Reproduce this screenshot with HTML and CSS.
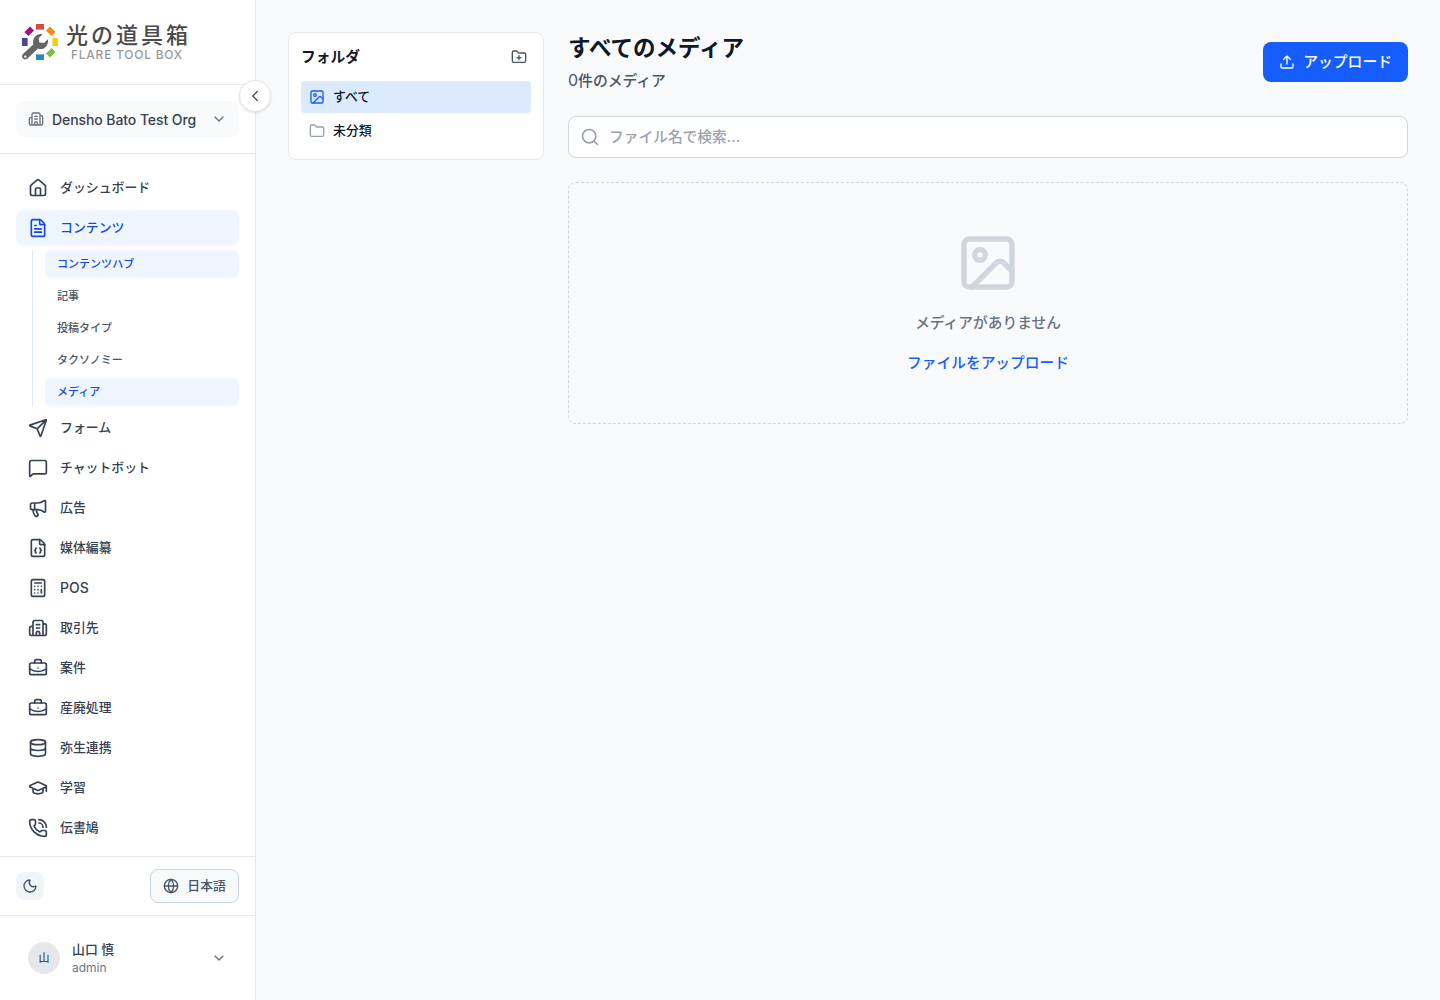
FILE: index.html
```html
<!DOCTYPE html>
<html lang="ja">
<head>
  <meta charset="UTF-8">
  <meta name="viewport" content="width=device-width, initial-scale=1.0">
  <title>光の道具箱</title>
  <link rel="stylesheet" href="styles.css">
</head>
<body>

<div class="app">
  <aside class="sidebar">
    <div class="brand">
      <svg class="brand-mark" viewBox="0 0 36 36">
        <rect x="14" y="0" width="8" height="5.6" fill="#dc483d"/>
        <rect x="14" y="0" width="8" height="5.6" fill="#f28c13" transform="rotate(45 18 18)"/>
        <rect x="14" y="0" width="8" height="5.6" fill="#f7cb1b" transform="rotate(90 18 18)"/>
        <rect x="14" y="0" width="8" height="5.6" fill="#7bbd3e" transform="rotate(135 18 18)"/>
        <rect x="14" y="0" width="8" height="5.6" fill="#238cbd" transform="rotate(180 18 18)"/>
        <rect x="14" y="0" width="8" height="5.6" fill="#44459b" transform="rotate(270 18 18)"/>
        <rect x="14" y="0" width="8" height="5.6" fill="#a90e79" transform="rotate(315 18 18)"/>
        <path fill="#666" d="M20.5 10.2l-3.700 3.700.5 4.700 4.600.5 3.900-3.800c1.100 4.600-2 9.200-6.300 9.600-1.500.1-2.700-.1-3.600-.5L6.100 34.100c-1.500 1.600-3.700 1.800-5.100.5-1.400-1.400-1.200-3.600.4-5.100l9.900-9.100c-1.300-5.600 2.700-11.400 9.200-10.200z"/>
        <circle cx="3.300" cy="32.600" r="1.200" fill="#fff"/>
      </svg>
      <div class="brand-text">
        <div class="brand-name">光の道具箱</div>
        <div class="brand-sub">FLARE TOOL BOX</div>
      </div>
    </div>

    <div class="org">
      <button class="org-btn">
        <svg class="icon icon-sm" viewBox="0 0 24 24"><path d="M10 12h4M10 8h4M14 21v-3a2 2 0 0 0-4 0v3M6 10H4a2 2 0 0 0-2 2v7a2 2 0 0 0 2 2h16a2 2 0 0 0 2-2V9a2 2 0 0 0-2-2h-2M6 21V5a2 2 0 0 1 2-2h8a2 2 0 0 1 2 2v16"/></svg>
        <span class="org-name">Densho Bato Test Org</span>
        <svg class="icon icon-sm" viewBox="0 0 24 24"><path d="m6 9 6 6 6-6"/></svg>
      </button>
    </div>

    <nav class="nav">
      <a class="nav-item">
        <svg class="icon" viewBox="0 0 24 24"><path d="M15 21v-8a1 1 0 0 0-1-1h-4a1 1 0 0 0-1 1v8"/><path d="M3 10a2 2 0 0 1 .709-1.528l7-6a2 2 0 0 1 2.582 0l7 6A2 2 0 0 1 21 10v9a2 2 0 0 1-2 2H5a2 2 0 0 1-2-2z"/></svg>
        <span>ダッシュボード</span>
      </a>
      <a class="nav-item active">
        <svg class="icon" viewBox="0 0 24 24"><path d="M6 22a2 2 0 0 1-2-2V4a2 2 0 0 1 2-2h8a2.400 2.400 0 0 1 1.704.706l3.588 3.588A2.400 2.400 0 0 1 20 8v12a2 2 0 0 1-2 2z"/><path d="M14 2v5a1 1 0 0 0 1 1h5M10 9H8M16 13H8M16 17H8"/></svg>
        <span>コンテンツ</span>
      </a>
      <div class="subnav">
        <a class="subnav-item active">コンテンツハブ</a>
        <a class="subnav-item">記事</a>
        <a class="subnav-item">投稿タイプ</a>
        <a class="subnav-item">タクソノミー</a>
        <a class="subnav-item active">メディア</a>
      </div>
      <a class="nav-item">
        <svg class="icon" viewBox="0 0 24 24"><path d="M14.536 21.686a.5.5 0 0 0 .937-.024l6.500-19a.496.496 0 0 0-.635-.635l-19 6.500a.5.5 0 0 0-.024.937l7.930 3.180a2 2 0 0 1 1.112 1.110zM21.854 2.147l-10.940 10.939"/></svg>
        <span>フォーム</span>
      </a>
      <a class="nav-item">
        <svg class="icon" viewBox="0 0 24 24"><path d="M22 17a2 2 0 0 1-2 2H6.828a2 2 0 0 0-1.414.586l-2.202 2.202A.71.71 0 0 1 2 21.286V5a2 2 0 0 1 2-2h16a2 2 0 0 1 2 2z"/></svg>
        <span>チャットボット</span>
      </a>
      <a class="nav-item">
        <svg class="icon" viewBox="0 0 24 24"><path d="M11 6a13 13 0 0 0 8.400-2.800A1 1 0 0 1 21 4v12a1 1 0 0 1-1.600.8A13 13 0 0 0 11 14H5a2 2 0 0 1-2-2V8a2 2 0 0 1 2-2zM6 14a12 12 0 0 0 2.400 7.200 2 2 0 0 0 3.200-2.400A8 8 0 0 1 10 14M8 6v8"/></svg>
        <span>広告</span>
      </a>
      <a class="nav-item">
        <svg class="icon" viewBox="0 0 24 24"><path d="M6 22a2 2 0 0 1-2-2V4a2 2 0 0 1 2-2h8a2.400 2.400 0 0 1 1.704.706l3.588 3.588A2.400 2.400 0 0 1 20 8v12a2 2 0 0 1-2 2z"/><path d="M14 2v5a1 1 0 0 0 1 1h5M10 12a1 1 0 0 0-1 1v1a1 1 0 0 1-1 1 1 1 0 0 1 1 1v1a1 1 0 0 0 1 1M14 18a1 1 0 0 0 1-1v-1a1 1 0 0 1 1-1 1 1 0 0 1-1-1v-1a1 1 0 0 0-1-1"/></svg>
        <span>媒体編纂</span>
      </a>
      <a class="nav-item">
        <svg class="icon" viewBox="0 0 24 24"><rect width="16" height="20" x="4" y="2" rx="2"/><path d="M8 6h8M16 14v4M16 10h.01M12 10h.01M8 10h.01M12 14h.01M8 14h.01M12 18h.01M8 18h.01"/></svg>
        <span class="latin">POS</span>
      </a>
      <a class="nav-item">
        <svg class="icon" viewBox="0 0 24 24"><path d="M10 12h4M10 8h4M14 21v-3a2 2 0 0 0-4 0v3M6 10H4a2 2 0 0 0-2 2v7a2 2 0 0 0 2 2h16a2 2 0 0 0 2-2V9a2 2 0 0 0-2-2h-2M6 21V5a2 2 0 0 1 2-2h8a2 2 0 0 1 2 2v16"/></svg>
        <span>取引先</span>
      </a>
      <a class="nav-item">
        <svg class="icon" viewBox="0 0 24 24"><path d="M12 12h.01M16 6V4a2 2 0 0 0-2-2h-4a2 2 0 0 0-2 2v2M22 13a18.150 18.150 0 0 1-20 0"/><rect width="20" height="14" x="2" y="6" rx="2"/></svg>
        <span>案件</span>
      </a>
      <a class="nav-item">
        <svg class="icon" viewBox="0 0 24 24"><path d="M12 12h.01M16 6V4a2 2 0 0 0-2-2h-4a2 2 0 0 0-2 2v2M22 13a18.150 18.150 0 0 1-20 0"/><rect width="20" height="14" x="2" y="6" rx="2"/></svg>
        <span>産廃処理</span>
      </a>
      <a class="nav-item">
        <svg class="icon" viewBox="0 0 24 24"><ellipse cx="12" cy="5" rx="9" ry="3"/><path d="M3 5v14a9 3 0 0 0 18 0V5M3 12a9 3 0 0 0 18 0"/></svg>
        <span>弥生連携</span>
      </a>
      <a class="nav-item">
        <svg class="icon" viewBox="0 0 24 24"><path d="M21.420 10.922a1 1 0 0 0-.019-1.838L12.830 5.180a2 2 0 0 0-1.660 0L2.600 9.080a1 1 0 0 0 0 1.832l8.570 3.908a2 2 0 0 0 1.660 0zM22 10v6M6 12.500V16a6 3 0 0 0 12 0v-3.500"/></svg>
        <span>学習</span>
      </a>
      <a class="nav-item">
        <svg class="icon" viewBox="0 0 24 24"><path d="M13 2a9 9 0 0 1 9 9M13 6a5 5 0 0 1 5 5M13.832 16.568a1 1 0 0 0 1.213-.303l.355-.465A2 2 0 0 1 17 15h3a2 2 0 0 1 2 2v3a2 2 0 0 1-2 2A18 18 0 0 1 2 4a2 2 0 0 1 2-2h3a2 2 0 0 1 2 2v3a2 2 0 0 1-.8 1.600l-.468.351a1 1 0 0 0-.292 1.233 14 14 0 0 0 6.392 6.384"/></svg>
        <span>伝書鳩</span>
      </a>
    </nav>

    <div class="tools">
      <button class="theme-btn">
        <svg class="icon icon-sm" viewBox="0 0 24 24"><path d="M20.985 12.486a9 9 0 1 1-9.473-9.472c.405-.022.617.46.402.803a6 6 0 0 0 8.268 8.268c.344-.215.825-.004.803.401"/></svg>
      </button>
      <button class="lang-btn">
        <svg class="icon icon-sm" viewBox="0 0 24 24"><circle cx="12" cy="12" r="10"/><path d="M12 2a14.500 14.500 0 0 0 0 20 14.500 14.500 0 0 0 0-20M2 12h20"/></svg>
        <span>日本語</span>
      </button>
    </div>

    <div class="user">
      <div class="avatar">山</div>
      <div class="user-info">
        <div class="user-name">山口 慎</div>
        <div class="user-role">admin</div>
      </div>
      <svg class="icon icon-sm" viewBox="0 0 24 24"><path d="m6 9 6 6 6-6"/></svg>
    </div>

    <button class="collapse-btn">
      <svg class="icon" viewBox="0 0 24 24"><path d="m15 18-6-6 6-6"/></svg>
    </button>
  </aside>

  <main class="main">
    <section class="folders">
      <div class="folders-head">
        <h2>フォルダ</h2>
        <svg class="icon icon-sm" viewBox="0 0 24 24"><path d="M12 10v6M9 13h6M20 20a2 2 0 0 0 2-2V8a2 2 0 0 0-2-2h-7.900a2 2 0 0 1-1.690-.9L9.600 3.900A2 2 0 0 0 7.930 3H4a2 2 0 0 0-2 2v13a2 2 0 0 0 2 2Z"/></svg>
      </div>
      <div class="folder selected">
        <svg class="icon icon-sm" viewBox="0 0 24 24"><rect width="18" height="18" x="3" y="3" rx="2"/><circle cx="9" cy="9" r="2"/><path d="m21 15-3.086-3.086a2 2 0 0 0-2.828 0L6 21"/></svg>
        <span>すべて</span>
      </div>
      <div class="folder">
        <svg class="icon icon-sm" viewBox="0 0 24 24"><path d="M20 20a2 2 0 0 0 2-2V8a2 2 0 0 0-2-2h-7.900a2 2 0 0 1-1.690-.9L9.600 3.900A2 2 0 0 0 7.930 3H4a2 2 0 0 0-2 2v13a2 2 0 0 0 2 2Z"/></svg>
        <span>未分類</span>
      </div>
    </section>

    <section class="media">
      <div class="media-head">
        <div>
          <h1>すべてのメディア</h1>
          <p class="count"><span class="num">0</span>件のメディア</p>
        </div>
        <button class="upload-btn">
          <svg class="icon icon-sm" viewBox="0 0 24 24"><path d="M12 3v12M17 8l-5-5-5 5M21 15v4a2 2 0 0 1-2 2H5a2 2 0 0 1-2-2v-4"/></svg>
          <span>アップロード</span>
        </button>
      </div>

      <div class="search">
        <svg class="icon" viewBox="0 0 24 24"><path d="m21 21-4.340-4.340"/><circle cx="11" cy="11" r="8"/></svg>
        <input type="text" placeholder="ファイル名で検索...">
      </div>

      <div class="empty">
        <svg class="icon empty-icon" viewBox="0 0 24 24"><rect width="18" height="18" x="3" y="3" rx="2"/><circle cx="9" cy="9" r="2"/><path d="m21 15-3.086-3.086a2 2 0 0 0-2.828 0L6 21"/></svg>
        <p>メディアがありません</p>
        <a class="empty-link">ファイルをアップロード</a>
      </div>
    </section>
  </main>
</div>

</body>
</html>
```
FILE: styles.css
```css
* {
  box-sizing: border-box;
}
body {
  margin: 0;
  font-family: Inter, "Noto Sans CJK JP", sans-serif;
  background: #f9fafb;
  color: #101828;
}
h1, h2, p {
  margin: 0;
}
button {
  font-family: inherit;
  border: none;
  padding: 0;
  cursor: pointer;
}
.icon {
  width: 20px;
  height: 20px;
  flex-shrink: 0;
  fill: none;
  stroke: currentColor;
  stroke-width: 2;
  stroke-linecap: round;
  stroke-linejoin: round;
}
.icon-sm {
  width: 16px;
  height: 16px;
}
.app {
  display: flex;
  height: 100vh;
}

/* sidebar */
.sidebar {
  position: relative;
  display: flex;
  flex-direction: column;
  width: 256px;
  flex-shrink: 0;
  background: #fff;
  border-right: 1px solid #e5e7eb;
}
.brand {
  display: flex;
  gap: 8px;
  height: 85px;
  flex-shrink: 0;
  padding: 24px 22px 0;
  border-bottom: 1px solid #e5e7eb;
}
.brand-mark {
  width: 36px;
  height: 36px;
}
.brand-text {
  margin-top: -5px;
}
.brand-name {
  font-family: "Noto Sans CJK JP", sans-serif;
  font-size: 22px;
  font-weight: 500;
  line-height: 28px;
  letter-spacing: 3px;
  color: #4a4a4a;
  white-space: nowrap;
}
.brand-sub {
  padding-left: 5px;
  font-size: 12px;
  font-weight: 500;
  line-height: 16px;
  letter-spacing: 0.75px;
  color: #999;
  white-space: nowrap;
}
.org {
  flex-shrink: 0;
  padding: 16px;
  border-bottom: 1px solid #e5e7eb;
}
.org-btn {
  display: flex;
  align-items: center;
  gap: 8px;
  width: 100%;
  height: 36px;
  padding: 0 12px;
  border-radius: 8px;
  background: #f9fafb;
  color: #6a7282;
}
.org-name {
  flex: 1;
  font-size: 14px;
  font-weight: 500;
  letter-spacing: -0.08px;
  text-align: left;
  white-space: nowrap;
  color: #364153;
}
.nav {
  display: flex;
  flex-direction: column;
  flex: 1;
  min-height: 0;
  gap: 4px;
  padding: 16px 16px 0;
  overflow: hidden;
}
.nav-item {
  display: flex;
  align-items: center;
  gap: 12px;
  height: 36px;
  flex-shrink: 0;
  padding: 0 12px;
  border-radius: 8px;
  font-size: 12.88px;
  line-height: 20px;
  font-weight: 500;
  color: #364153;
}
.latin {
  font-size: 14px;
}
.nav-item.active,
.subnav-item.active {
  background: #eff6ff;
  color: #1447e6;
}
.subnav {
  display: flex;
  flex-direction: column;
  flex-shrink: 0;
  gap: 4px;
  margin-left: 16px;
  padding-left: 12px;
  border-left: 1px solid #dbeafe;
}
.subnav-item {
  height: 28px;
  padding: 0 12px;
  border-radius: 6px;
  font-size: 11.04px;
  font-weight: 500;
  line-height: 28px;
  color: #4a5565;
}
.tools {
  display: flex;
  align-items: center;
  justify-content: space-between;
  height: 60px;
  flex-shrink: 0;
  padding: 0 16px;
  border-top: 1px solid #e5e7eb;
  border-bottom: 1px solid #e5e7eb;
}
.theme-btn {
  display: flex;
  align-items: center;
  justify-content: center;
  width: 28px;
  height: 28px;
  border-radius: 8px;
  background: #f1f5f9;
  color: #45556c;
}
.lang-btn {
  display: flex;
  align-items: center;
  gap: 8px;
  height: 34px;
  padding: 0 12px;
  border: 1px solid #cad5e2;
  border-radius: 8px;
  background: #f8fafc;
  font-size: 12.88px;
  font-weight: 500;
  line-height: 20px;
  color: #45556c;
}
.user {
  display: flex;
  align-items: center;
  gap: 12px;
  height: 84px;
  flex-shrink: 0;
  padding: 0 28px;
  color: #6a7282;
}
.avatar {
  width: 32px;
  height: 32px;
  border-radius: 50%;
  background: #e5e7eb;
  font-size: 11.04px;
  font-weight: 500;
  line-height: 32px;
  text-align: center;
  color: #4a5565;
}
.user-info {
  flex: 1;
}
.user-name {
  font-size: 12.88px;
  font-weight: 500;
  line-height: 20px;
  color: #364153;
}
.user-role {
  font-size: 12px;
  line-height: 16px;
}
.collapse-btn {
  position: absolute;
  top: 80px;
  right: -16px;
  display: flex;
  align-items: center;
  justify-content: center;
  width: 32px;
  height: 32px;
  border: 1px solid #e5e7eb;
  border-radius: 50%;
  background: #fff;
  box-shadow: 0 1px 3px rgba(0, 0, 0, 0.12);
  color: #4a5565;
}
.collapse-btn .icon {
  width: 18px;
  height: 18px;
}

/* main area */
.main {
  display: flex;
  align-items: flex-start;
  flex: 1;
  gap: 24px;
  padding: 32px;
}
.folders {
  width: 256px;
  height: 128px;
  flex-shrink: 0;
  padding: 12px;
  border: 1px solid #e5e7eb;
  border-radius: 8px;
  background: #fff;
}
.folders-head {
  display: flex;
  align-items: center;
  justify-content: space-between;
  height: 24px;
  margin-bottom: 12px;
  padding-right: 4px;
  color: #4a5565;
}
.folders-head h2 {
  font-size: 14.72px;
  font-weight: 600;
  line-height: 24px;
  color: #101828;
}
.folder {
  display: flex;
  align-items: center;
  gap: 8px;
  height: 32px;
  margin-bottom: 2px;
  padding: 0 8px;
  border-radius: 4px;
  font-size: 12.88px;
  font-weight: 500;
  line-height: 20px;
}
.folder .icon {
  color: #99a1af;
}
.folder.selected {
  background: #dbeafe;
}
.folder.selected .icon {
  color: #155dfc;
}
.media {
  flex: 1;
}
.media-head {
  display: flex;
  align-items: center;
  justify-content: space-between;
  height: 60px;
  margin-bottom: 24px;
}
.media-head h1 {
  font-size: 22.5px;
  font-weight: 700;
  line-height: 32px;
}
.count {
  margin-top: 4px;
  font-size: 14.8px;
  font-weight: 500;
  line-height: 24px;
  color: #4a5565;
}
.num {
  font-size: 16px;
  font-weight: 400;
}
.upload-btn {
  display: flex;
  align-items: center;
  gap: 8px;
  height: 40px;
  padding: 0 16px;
  border-radius: 8px;
  background: #155dfc;
  font-size: 14.8px;
  font-weight: 500;
  line-height: 24px;
  color: #fff;
}
.upload-btn span {
  margin-bottom: 1px;
}
.search {
  display: flex;
  align-items: center;
  gap: 9px;
  height: 42px;
  margin-bottom: 24px;
  padding: 0 12px 0 11px;
  border: 1px solid #d1d5dc;
  border-radius: 8px;
  background: #fff;
  color: #99a1af;
}
.search input {
  flex: 1;
  padding: 0;
  border: none;
  outline: none;
  background: none;
  font-family: inherit;
  font-size: 14.72px;
  font-weight: 500;
}
.search input::placeholder {
  color: #99a1af;
}
.empty {
  display: flex;
  flex-direction: column;
  align-items: center;
  height: 242px;
  padding-top: 48px;
  border: 1px dashed #d1d5dc;
  border-radius: 8px;
  font-size: 14.72px;
  font-weight: 500;
  line-height: 24px;
  color: #6a7282;
}
.empty-icon {
  width: 64px;
  height: 64px;
  margin-bottom: 16px;
  color: #d1d5dc;
}
.empty-link {
  margin-top: 16px;
  color: #155dfc;
}
```
